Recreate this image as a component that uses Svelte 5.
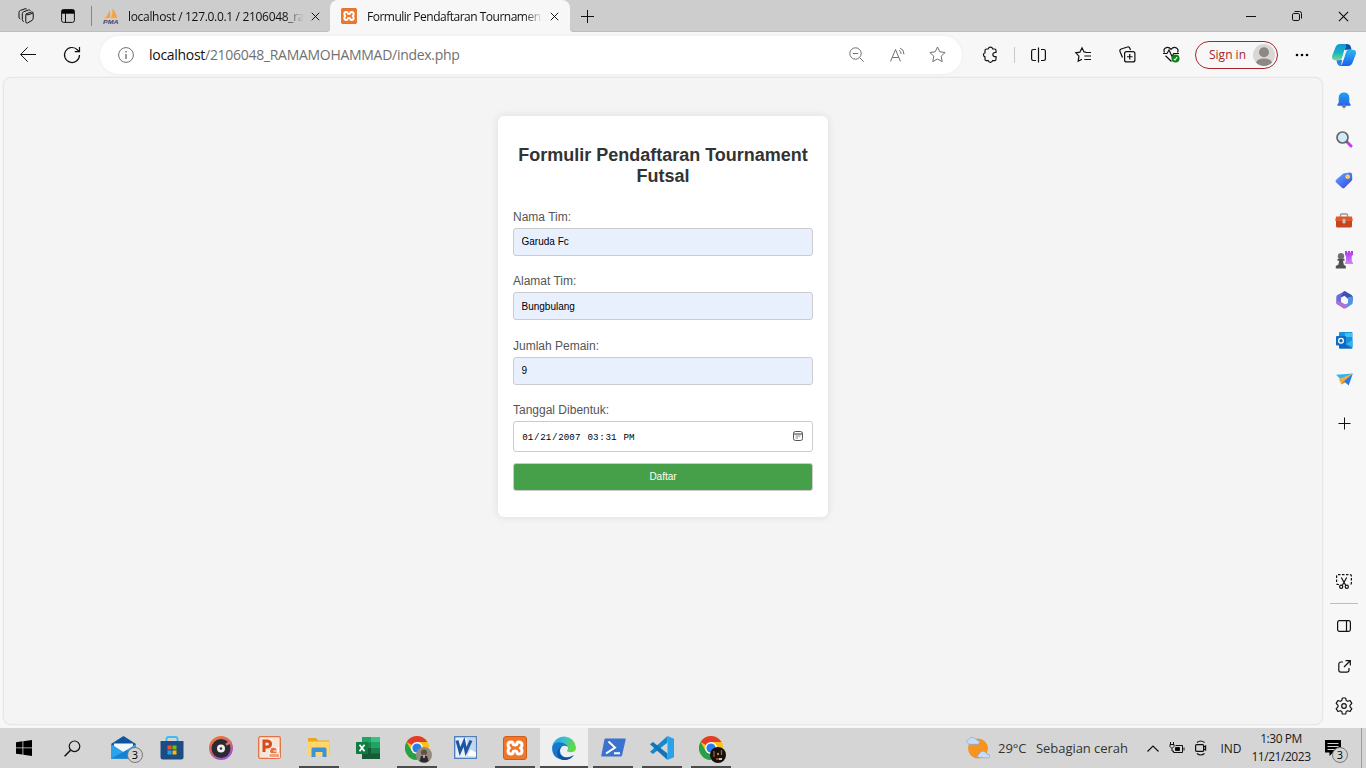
<script>
  let team = $state('Garuda Fc');
  let address = $state('Bungbulang');
  let players = $state('9');
</script>

<svelte:head><title>Formulir Pendaftaran Tournament Futsal</title></svelte:head>

{#snippet cross(s)}
  <svg width={s} height={s} viewBox="0 0 12 12" class="line"><path d="M1 1l10 10M11 1L1 11" stroke-width="1.300" /></svg>
{/snippet}

{#snippet xampp(s)}
  <svg width={s} height={s} viewBox="0 0 24 24">
    <rect x=".5" y=".5" width="23" height="23" rx="2.500" fill="#f0762a" stroke="#cf5d18" />
    <path d="M8.300 6q1.700 0 1.700 1.500T12 9t2-1.500T15.700 6Q19 6 19 9q0 2-1.500 3 1.500 1 1.500 3 0 3-3.300 3-1.700 0-1.700-1.500T12 15t-2 1.500T8.300 18Q5 18 5 15q0-2 1.500-3Q5 11 5 9q0-3 3.300-3z" fill="none" stroke="#fff" stroke-width="3" stroke-linejoin="round" />
  </svg>
{/snippet}

{#snippet chrome()}
  <svg width="24" height="24" viewBox="0 0 24 24">
    <circle cx="12" cy="12" r="12" fill="#fbc116" />
    <path d="M12 12L1.600 6A12 12 0 0 1 22.400 6H12z" fill="#e33b2e" />
    <path d="M1.600 6A12 12 0 0 0 12 24l5.200-9L12 12 6.800 15z" fill="#27a048" />
    <path d="M12 6h10.400A12 12 0 0 1 12 24l5.200-9z" fill="#fbc116" />
    <circle cx="12" cy="12" r="6" fill="#fff" /><circle cx="12" cy="12" r="4.600" fill="#2b7de9" />
  </svg>
{/snippet}

<div class="screen">
  <header class="tabs">
    <div class="seg left">
      <span class="cell w40">
        <svg width="18" height="18" viewBox="0 0 18 18" class="line"><path d="M9.500 6.700l5-1.700q1.700-.3 1.700 1.300v5q0 1.400-1.200 2.100L10.500 16q-1.700.4-1.700-1.300V7.700q0-.7.700-1zM9 7q.7 1 2 .8l4.800-1.600M6.800 14.600q-1.500-.5-1.500-2V6.700q0-1.500 1.500-2L11.500 3q1.400-.2 2 .6M3.300 12q-1.300-.5-1.300-2V5.400q0-1.500 1.500-2L8 1.800q1-.2 1.700.2" /></svg>
      </span>
      <span class="cell w44">
        <svg width="14" height="14" viewBox="0 0 14 14" class="line"><rect x=".6" y=".6" width="12.800" height="12.800" rx="2" /><path d="M1 1h12v3.200H1z" fill="#000" /><path d="M4.500 4v9" /></svg>
      </span>
      <i class="bar"></i>
      <div class="tab idle">
        <svg width="16" height="16" viewBox="0 0 16 16"><path d="M1 10.500Q5 8 6.500 1.500q1.200 4 .5 8.500zM7.800 10Q10 6 9.500.5q4 5 4.500 9.500z" fill="#f7a13c" /><path d="M0 11q8-2 16 0" stroke="#e9c9a0" fill="none" stroke-width=".6" /><text x="0" y="15.800" textLength="15.500" lengthAdjust="spacingAndGlyphs" class="pma">PMA</text></svg>
        <span class="tt idlett">localhost / 127.0.0.1 / 2106048_ra</span>
        {@render cross(9)}
      </div>
    </div>
    <div class="activewrap">
      <div class="tab active">
        {@render xampp(16)}
        <span class="tt">Formulir Pendaftaran Tournamen</span>
        {@render cross(9)}
      </div>
    </div>
    <div class="seg right">
      <svg width="13" height="13" viewBox="0 0 13 13" class="line"><path d="M6.500 0v13M0 6.500h13" /></svg>
      <span class="grow"></span>
      <span class="cell w46"><svg width="10" height="10" viewBox="0 0 10 10" class="line"><path d="M0 5.500h10" /></svg></span>
      <span class="cell w46"><svg width="10" height="10" viewBox="0 0 10 10" class="line"><rect x=".5" y="2.500" width="7" height="7" rx="1.300" /><path d="M2.500.5h5a2 2 0 0 1 2 2v5" /></svg></span>
      <span class="cell w46">{@render cross(11)}</span>
    </div>
  </header>

  <nav class="toolbar">
    <span class="cell nb"><svg width="16" height="16" viewBox="0 0 16 16" class="line"><path d="M16 7.500H.8M7.700.3L.6 7.500l7.100 7.200" /></svg></span>
    <span class="cell nb2"><svg width="18" height="18" viewBox="0 0 18 18" class="line s12"><path d="M16.500 9A7.500 7.500 0 1 1 14.600 4l1.500 1.500M16.500 1v4.700h-4.800" /></svg></span>
    <div class="address">
      <svg width="16" height="16" viewBox="0 0 16 16" class="line gray"><circle cx="8" cy="8" r="7.400" /><path d="M8 7v5M8 4v1.400" stroke-width="1.400" /></svg>
      <span class="url">localhost<em>/2106048_RAMAMOHAMMAD/index.php</em></span>
      <span class="cell w40"><svg width="16" height="16" viewBox="0 0 16 16" class="line gray"><circle cx="6.500" cy="6.500" r="5.700" /><path d="M3.800 6.500h5.400M10.600 10.600l4.200 4.200" /></svg></span>
      <span class="cell w40"><svg width="17" height="16" viewBox="0 0 17 16" class="line gray"><path d="M1 14.500L6 2.500l5 12M2.900 10.500h6.200M9.500 3.200q2 1 2.100 3.700M10.500 1q4 1.500 4 6.300" transform="translate(.5)" /></svg></span>
      <span class="cell w40"><svg width="17" height="17" viewBox="0 0 17 17" class="line gray"><path d="M8.500 1l2.300 4.800 5.300.7-3.900 3.700 1 5.400-4.700-2.600-4.700 2.600 1-5.400L.9 6.500l5.300-.7z" /></svg></span>
    </div>
    <span class="cell pz"><svg width="17" height="17" viewBox="0 0 17 17" class="line s12"><path d="M4.500 3h1.700a2.300 2.300 0 0 1 4.500 0h1.800q1.500 0 1.500 1.500v2h-1a2.100 2.100 0 0 0 0 4.200h1v2.500q0 1.500-1.500 1.500h-1.900a2.300 2.300 0 0 1-4.400 0H4.500Q3 14.700 3 13.200v-2.300a2.200 2.200 0 0 1 0-4.200V4.500Q3 3 4.500 3z" /></svg></span>
    <i class="vbar"></i>
    <span class="cell sp"><svg width="15" height="16" viewBox="0 0 15 16" class="line s12"><path d="M5 2.500H2.300Q.6 2.500.6 4.200v7.600q0 1.700 1.700 1.700H5M10 2.500h2.700q1.700 0 1.700 1.700v7.600q0 1.700-1.700 1.700H10M7.500.5v15" /></svg></span>
    <span class="cell w44"><svg width="17" height="16" viewBox="0 0 17 16" class="line s12"><path d="M11 5.200l-2-.3L7 .8 4.900 5.200.8 5.800l3.100 3.300-.7 5.200L7 12.300M10.500 5.500H16M9.300 9H16M9.300 12.500H16" /></svg></span>
    <span class="cell w44"><svg width="17" height="17" viewBox="0 0 17 17" class="line s12"><path d="M3.500 11.500L1 5.500Q.4 3.600 2.200 3L8.500 1q1.800-.5 2.500 1.500l.5 1.500" /><rect x="5.600" y="5.600" width="10.300" height="10.300" rx="2" /><path d="M10.750 8v5.500M8 10.750h5.500" /></svg></span>
    <span class="cell w44"><svg width="17" height="17" viewBox="0 0 17 17" class="line s12"><path d="M1.500 6.500Q0 3.500 2.500 2 5.500.3 8 3.300 10.500.3 13.500 2q2.500 1.500 1 4.500M0 7.500h4L6 4l3 6.500 1.700-3H16M2.500 9.800l6 5.700" /><circle cx="12.500" cy="12.500" r="4" fill="#10801a" stroke="none" /><path d="M10.800 13l1.200 1L14.200 11" stroke="#fff" /></svg></span>
    <div class="signin"><span>Sign in</span>
      <svg width="22" height="22" viewBox="0 0 22 22"><circle cx="11" cy="11" r="11" fill="#d9d7d5" /><circle cx="11" cy="8.300" r="5" fill="#8b8886" /><path d="M3 18.500q1.500-4 8-4t8 4a11 11 0 0 1-16 0z" fill="#8b8886" /></svg>
    </div>
    <span class="cell dots"><svg width="14" height="4" viewBox="0 0 14 4"><circle cx="2" cy="2" r="1.300" /><circle cx="7" cy="2" r="1.300" /><circle cx="12" cy="2" r="1.300" /></svg></span>
    <span class="cell cop">
      <svg width="24" height="22" viewBox="0 0 24 22">
        <defs>
          <linearGradient id="c1" x1="0" y1="0" x2="0" y2="1"><stop stop-color="#1296d4" /><stop offset=".55" stop-color="#18b4c4" /><stop offset="1" stop-color="#7ade7e" /></linearGradient>
          <linearGradient id="c2" x1="0" y1="0" x2="0" y2="1"><stop stop-color="#2eb8ee" /><stop offset="1" stop-color="#1a5ff0" /></linearGradient>
        </defs>
        <path d="M7.500 0H16q-1.800.5-2.500 3l-3 10.500Q9.700 16.200 7.500 16.200H3Q-.8 16.200.3 11.500L3.700 2.700Q4.700 0 7.500 0z" fill="url(#c1)" />
        <path d="M14.500 0q3.500 0 4.300 2.800l.8 3h-5q-1.400 0-2 .8l1-3.600q.3-2 .9-3z" fill="#124fa8" />
        <path d="M16.500 22H8q1.800-.5 2.500-3l3-10.500q.8-2.700 3-2.700H21q3.800 0 2.700 4.700l-3.400 8.800Q19.300 22 16.500 22z" fill="url(#c2)" />
        <path d="M9.500 22q-3.500 0-4.300-2.800l-.8-3h3.100q2.200 0 3-2l-1 5q-.3 1.800 0 2.800z" fill="#2c7de6" />
        <path d="M12.200 6.200h3q-1 .7-1.400 2.300l-2 6.700q-.3.800-1 .8H8.500q1.300-.7 1.700-2.300z" fill="#f7f7f7" />
      </svg>
    </span>
  </nav>

  <div class="middle">
    <main class="page">
      <form class="card" onsubmit={(e) => e.preventDefault()}>
        <h2>Formulir Pendaftaran Tournament Futsal</h2>
        <label for="team">Nama Tim:</label>
        <input id="team" bind:value={team} />
        <label for="addr">Alamat Tim:</label>
        <input id="addr" class="low" bind:value={address} />
        <label for="num" class="late">Jumlah Pemain:</label>
        <input id="num" bind:value={players} />
        <label for="date">Tanggal Dibentuk:</label>
        <div id="date" class="date">
          <span class="stamp"><b>01</b>/<b>21</b>/<b>2007</b>&nbsp;<b>03</b>:<b>31</b>&nbsp;<b>PM</b></span>
          <svg width="10" height="10" viewBox="0 0 10 10" fill="none" stroke="#555"><rect x=".5" y=".5" width="9" height="9" rx="2" /><path d="M.5 3h9" stroke-width="1.200" /><path d="M2.500 5h5M2.500 7h2.500" stroke="#888" /></svg>
        </div>
        <button>Daftar</button>
      </form>
    </main>

    <aside class="side">
      <span class="cell h40"><svg width="14" height="17" viewBox="0 0 14 17"><defs><linearGradient id="bell" x1="0" y1="0" x2="0" y2="1"><stop stop-color="#1fa2f2" /><stop offset="1" stop-color="#2a62e8" /></linearGradient></defs><path d="M4.500 14h5L7 16.500z" fill="#777" /><path d="M7 .5q5.300 0 5.300 5.500v4.500l1.500 2.500q0 .8-.8.8H1q-.8 0-.8-.8l1.500-2.500V6Q1.700.5 7 .5z" fill="url(#bell)" /></svg></span>
      <span class="cell h40 up"><svg width="17" height="17" viewBox="0 0 17 17"><path d="M10.800 10.800L15 15" stroke="#c23cf2" stroke-width="3" stroke-linecap="round" /><path d="M10 10l1.500 1.500" stroke="#666" stroke-width="2" /><circle cx="6.500" cy="6.500" r="5.500" fill="#cfeafa" stroke="#666" stroke-width="1.700" /></svg></span>
      <span class="cell h40"><svg width="18" height="17" viewBox="0 0 18 17"><defs><linearGradient id="tag" x1="0" y1="0" x2="1" y2="1"><stop stop-color="#64a8ff" /><stop offset="1" stop-color="#3541e8" /></linearGradient></defs><path d="M9.500 1.300L15 .5q1.800 0 2 1.500l.3 5q0 1-.7 1.700l-7 7q-1.400 1.200-2.700 0L1.200 10.500q-1.300-1.300 0-2.700l6.500-5.700q.8-.7 1.800-.8z" fill="url(#tag)" /><circle cx="12.700" cy="4.700" r="2" fill="#fbd22c" stroke="#f5eec0" stroke-width=".5" /></svg></span>
      <span class="cell h40"><svg width="18" height="15" viewBox="0 0 18 15"><path d="M5.500 4V2q0-1 1-1h5q1 0 1 1v2" fill="none" stroke="#999" stroke-width="1.500" /><path d="M1 3.500h16l.8 4.500H.2z" fill="#e0592c" /><path d="M1 8h16v5q0 1.500-1.500 1.500h-13Q1 14.500 1 13z" fill="#c8441a" /><rect x="7.500" y="6" width="3" height="4.500" rx="1" fill="#b9c4c9" /></svg></span>
      <span class="cell h40"><svg width="18" height="18" viewBox="0 0 18 18"><defs><linearGradient id="rook" x1="0" y1="0" x2="0" y2="1"><stop stop-color="#ae35ee" /><stop offset="1" stop-color="#d183fa" /></linearGradient></defs><path d="M10 0h2v1.500h1V0h2v1.500h1V0h2v4l-1.300 1v5L18 12v1h-8v-1l1-2V5l-1-1z" fill="url(#rook)" /><circle cx="6" cy="5.300" r="3.200" fill="#6f6f6f" /><path d="M2.500 8h7v1.700H8l.8 4 2 1.300v2.500H.8V15l2.500-1.300.9-4H2.500z" fill="#505050" /></svg></span>
      <span class="cell h40"><svg width="17" height="18" viewBox="0 0 17 18"><path d="M8 .4q1-.5 2 0l-3.500 2Q5 3.500 5 5v7L1.800 13.800Q.3 12.800.3 11.300V6q0-1.300 1.200-2z" fill="#6a6fd8" /><path d="M7.700.6q1.200-.6 2.300.1l5.500 3.200q1.200.8 1.200 2.200v4.500L12 8 8.500 4.700 5 6.500V5q0-1.300 1-2z" fill="#3a50b8" /><path d="M16.700 5.500v6q0 1.300-1.200 2L9.700 17.300 7 15l5-3V6z" fill="#4f93e2" /><path d="M.3 10v1.500q0 1.300 1.200 2l5.700 3.700q1.200.6 2.300 0l4-2.400L8.500 13 5 11z" fill="#b070d4" /><path d="M8.500 5.800l2.900 1.700v3.200l-2.900 1.700-2.900-1.700V7.500z" fill="#f7f7fc" /></svg></span>
      <span class="cell h40"><svg width="17" height="17" viewBox="0 0 17 17"><path d="M4 0h11.500q1 0 1 1v14.500q0 1-1 1H4q-1 0-1-1V1q0-1 1-1z" fill="#1792dc" /><path d="M9 1h7v4H9z" fill="#46bff2" /><path d="M3 9l13.500 7.500H4q-1 0-1-1z" fill="#1466b8" /><path d="M16.500 8v7L10 12z" fill="#36b3ef" /><rect y="4" width="10" height="9.500" rx="1" fill="#0d6cc4" /><circle cx="5" cy="8.700" r="2.400" fill="none" stroke="#fff" stroke-width="1.300" /></svg></span>
      <span class="cell h40 up"><svg width="17" height="13" viewBox="0 0 18 14"><path d="M0 2L18 .5 6 8z" fill="#32b5ec" /><path d="M18 .5L13.500 13.500 8 8.500z" fill="#2a79e4" /><path d="M18 .5L3 6.500l2.500 6L8 9z" fill="#f3ae38" /><path d="M5.500 12.500L8 8.500l2 1.500z" fill="#c87a18" /></svg></span>
      <span class="cell h48 up"><svg width="11" height="11" viewBox="0 0 11 11" class="line"><path d="M5.500-.5v12M-.5 5.500h12" /></svg></span>
      <span class="grow"></span>
      <span class="cell h44"><svg width="16" height="15" viewBox="0 0 16 15" class="line s12"><path d="M3 10.500H2Q.6 10.500.6 9V2Q.6.600 2 .600h12q1.400 0 1.400 1.400v7q0 1.500-1.400 1.500h-1" stroke-dasharray="2.500 1.500" /><path d="M5.300 3.500l4.500 8M10.700 3.500l-4.500 8" /><circle cx="5.200" cy="12.700" r="1.600" /><circle cx="10.800" cy="12.700" r="1.600" /></svg></span>
      <i class="hr"></i>
      <span class="cell h44"><svg width="14" height="12" viewBox="0 0 14 12" class="line s12"><rect x=".6" y=".6" width="12.800" height="10.800" rx="1.800" /><path d="M9.500.600v10.800" /></svg></span>
      <span class="cell h36"><svg width="13" height="13" viewBox="0 0 13 13" class="line s12"><path d="M5 2H3Q.8 2 .8 4.200V10q0 2.200 2.200 2.200h5.800Q11 12.200 11 10V8M7.500.7h4.800v4.800M12 1L6 7" /></svg></span>
      <span class="cell h44"><svg width="18" height="18" viewBox="0 0 18 18" class="line s12"><path d="M7.300 1h3.400l.5 2.500 1.500.8 2.400-.8 1.700 2.900L15 8.300v1.500l1.800 1.800-1.700 2.900-2.400-.8-1.500.8-.5 2.500H7.300l-.5-2.500-1.500-.8-2.400.8-1.700-2.900L3 9.800V8.300L1.200 6.400l1.700-2.900 2.400.8 1.500-.8z" stroke-linejoin="round" /><circle cx="9" cy="9" r="2.300" /></svg></span>
    </aside>
  </div>

  <footer class="taskbar">
    <span class="cell start"><svg width="16" height="16" viewBox="0 0 16 16"><path d="M0 2.200l6.500-.9v6.200H0zM7.300 1.200L16 0v7.500H7.300zM0 8.300h6.500v6.300L0 13.700zM7.300 8.300H16V16l-8.700-1.200z" /></svg></span>
    <span class="cell start"><svg width="17" height="17" viewBox="0 0 17 17" class="line s12"><circle cx="10.500" cy="6.300" r="5.300" /><path d="M6.500 10.300L.6 16.200" stroke-width="1.500" /></svg></span>
    <div class="apps">
      <span class="app"><svg width="25" height="23" viewBox="0 0 25 23"><path d="M0 8L12.500 0 25 8v14.500H0z" fill="#10539f" /><path d="M3 7.500h19V16H3z" fill="#f4f8fc" /><path d="M0 8l12.500 8L25 8v14.500H0z" fill="#2ba3ea" /><path d="M0 22.500L16 14l9 8.500z" fill="#1682d4" /></svg><b class="badge mail">3</b></span>
      <span class="app"><svg width="24" height="24" viewBox="0 0 24 24"><path d="M6.500 6V3q0-2 2-2h7q2 0 2 2v3" fill="none" stroke="#3dbbf3" stroke-width="1.900" /><path d="M.5 5h23v16q0 2.500-2.500 2.500H3Q.5 23.500.5 21z" fill="#1d4c82" /><path d="M7.500 9.500h4v4h-4z" fill="#f25022" /><path d="M12.500 9.500h4v4h-4z" fill="#7fba00" /><path d="M7.500 14.500h4v4h-4z" fill="#15a6f0" /><path d="M12.500 14.500h4v4h-4z" fill="#ffb900" /></svg></span>
      <span class="app"><svg width="24" height="24" viewBox="0 0 24 24"><defs><linearGradient id="gm" x1="0" y1="0" x2=".5" y2="1"><stop stop-color="#f57a32" /><stop offset=".5" stop-color="#d56862" /><stop offset="1" stop-color="#9a55cf" /></linearGradient></defs><circle cx="12" cy="12" r="12" fill="url(#gm)" /><circle cx="12" cy="12.500" r="9.500" fill="#292b31" /><circle cx="12" cy="12.500" r="4" fill="#eee" /><circle cx="12" cy="12.500" r="1.200" fill="#333" /><path d="M22 5.500l-5 3.200" stroke="#df7269" stroke-width="2.500" /></svg></span>
      <span class="app nudge"><svg width="23" height="23" viewBox="0 0 23 23"><rect x=".7" y=".7" width="21.600" height="21.600" rx="1.500" fill="#f9e4da" stroke="#e17345" stroke-width="1.300" /><path d="M6 16V5h2.500q4 0 4 3t-4 3H6.500" fill="none" stroke="#d44d1d" stroke-width="3" /><circle cx="15.500" cy="15" r="4" fill="#e57342" stroke="#fff" /><path d="M15.500 15h5v-4" stroke="#fff" fill="none" /><rect x="11" y="17.500" width="10.500" height="4" fill="#eda285" stroke="#fff" stroke-width=".7" /></svg></span>
      <span class="app open"><svg width="22" height="20" viewBox="0 0 22 20"><path d="M0 1q0-1 1-1h7l2.200 2.500H20.500q1 0 1 1V17H0z" fill="#e9a71e" /><path d="M0 3.500h21.500V18H0z" fill="#ffd667" /><path d="M3.500 11q0-1.500 1.500-1.500h12q1.500 0 1.500 1.500v8h-4v-5h-7v5h-4z" fill="#3b92da" /></svg></span>
      <span class="app"><svg width="24" height="22" viewBox="0 0 24 22"><path d="M6 0h17q1 0 1 1v20q0 1-1 1H6z" fill="#18814c" /><path d="M6 0h9v5.500H6z" fill="#21a366" /><path d="M15 0h9v5.500h-9z" fill="#33c481" /><path d="M15 5.500h9V11h-9z" fill="#21a366" /><path d="M6 11h9v11H6zM15 16.500h9V22h-9z" fill="#185c37" /><rect y="5" width="12" height="12" rx="1" fill="#107c41" /><path d="M3.500 7.800l5 6.500M8.500 7.800l-5 6.500" stroke="#fff" stroke-width="1.800" /></svg></span>
      <span class="app open">{@render chrome()}
        <svg class="mini" width="16" height="16" viewBox="0 0 16 16"><circle cx="8" cy="8" r="8" fill="#978b80" /><circle cx="8" cy="5.500" r="3" fill="#5c514b" /><path d="M3.500 14l1.500-5h6l1.500 5q-4 3-9 0z" fill="#2b2930" /><path d="M7 7.500h2V11H7z" fill="#b89a86" /></svg></span>
      <span class="app nudge"><svg width="23" height="23" viewBox="0 0 23 23"><rect x=".7" y=".7" width="21.600" height="21.600" fill="#e8f0fa" stroke="#4a7ab8" stroke-width="1.300" /><path d="M13 21.500V1.500h8.500v20z" fill="#c3d6ee" /><path d="M3 4.500l3 11L10 6l2 9.500 5-11" fill="none" stroke="#1e55a5" stroke-width="3" /><path d="M13 20l3.500-6.500 5.500 3v4z" fill="#fff" /></svg></span>
      <span class="app open">{@render xampp(24)}</span>
      <span class="app open current"><svg width="24" height="24" viewBox="0 0 24 24"><defs><linearGradient id="e1" x1="0" y1="0" x2="1" y2=".3"><stop stop-color="#2798dd" /><stop offset=".5" stop-color="#34c1d8" /><stop offset="1" stop-color="#66d744" /></linearGradient></defs><path d="M.2 10.500A12 12 0 0 1 24 11.500q0 4.500-4.800 4.700-4.200 0-4.200-1.700 1.500-1.200 1-3.200Q14.500 7 9 7 3 7 .2 10.500z" fill="url(#e1)" /><path d="M.2 10.500Q3.500 5.500 9 6.500q5.500.8 7 4.500-4-2.500-6.500 0-3.500 4.500 1 9 5 3.500 11.500-1Q18 24 12 24-.7 23 .2 10.500z" fill="#1478ce" /><path d="M9.500 11q-4 3.500-1 8 4.500 5 13 .2Q18 24.500 11 24 4.500 22 5.500 16q.5-3.500 4-5z" fill="#12509c" /></svg></span>
      <span class="app open"><svg width="25" height="19" viewBox="0 0 25 19"><path d="M4.500.5H24q1 0 .7 1L21 17.500q-.3 1-1.300 1H1q-1 0-.7-1L3.500 1.300q.2-.8 1-.8z" fill="#3b72cf" /><path d="M7.500 3.500l6.500 6-9 6M13 15.200h6" fill="none" stroke="#fff" stroke-width="2" /></svg></span>
      <span class="app open"><svg width="24" height="24" viewBox="0 0 24 24"><path d="M17.500 0v6.500L3 18 0 15.700z" fill="#1688cf" /><path d="M17.500 24v-6.500L3 6 0 8.300z" fill="#1274b8" /><path d="M17.500 0L24 2.700v18.600L17.500 24z" fill="#27a3ec" /></svg></span>
      <span class="app open">{@render chrome()}
        <svg class="mini" width="16" height="16" viewBox="0 0 16 16"><circle cx="8" cy="8" r="8" fill="#16110e" /><path d="M4 4v6M11.500 3v5M6 12h5" stroke="#a5602c" stroke-width="1.300" /><circle cx="8" cy="7" r="1.200" fill="#b08058" /><path d="M9 11h3v2H9z" fill="#cfc6bd" /></svg></span>
    </div>
    <span class="grow"></span>
    <div class="weather">
      <svg width="24" height="22" viewBox="0 0 24 22"><circle cx="12" cy="11.500" r="10" fill="#f79420" /><path d="M2 6.500Q-1 4 2.500 2.800 4-.5 7.500.5q2.500.7 3 2.500Q14 3 13.500 6q-.5 1.500-2.500 1.300H4q-1.300 0-2-.8zM13 20.500q-3-1.500.3-3.700 1-3 4.200-2.600 2.500.3 3.200 2.800 3.500.3 3 2.700-.3 1.200-2 1.300z" fill="#c6dcf7" stroke="#7ea8e0" stroke-width=".7" /></svg>
      <span class="temp">29°C</span><span class="sky">Sebagian cerah</span>
    </div>
    <span class="cell tray"><svg width="12" height="7" viewBox="0 0 12 7" class="line s12"><path d="M.5 6.500L6 1l5.500 5.500" /></svg></span>
    <span class="cell tray"><svg width="16" height="12" viewBox="0 0 16 12" class="line"><path d="M6.500 3.500h7v7h-9V9M15 5.500v3" /><path d="M6.500 5.500h4v3h-4z" fill="#000" /><path d="M1 2.500h4v2L3 6.500 1 4.500zM1.500 0v2.500M4.500 0v2.500M3 6.500V9h1.500" /></svg></span>
    <span class="cell tray"><svg width="12" height="16" viewBox="0 0 12 16" class="line s12"><path d="M2 2.500q3.500-3 7.500 0M2 13.500q3.500 3 7.500 0" /><rect x=".6" y="4.600" width="8" height="6.800" rx="1" /><path d="M8.600 7l2-1v4l-2-1" /></svg></span>
    <span class="lang">IND</span>
    <div class="clock"><span>1:30 PM</span><span>11/21/2023</span></div>
    <div class="notif"><svg width="17" height="17" viewBox="0 0 17 17"><path d="M0 0h16v12.500H8L4.500 16v-3.500H0z" /><path d="M2.500 3.500h11M2.500 6.500h11M2.500 9.500h7" stroke="#d3d3d3" /></svg><b class="badge">3</b></div>
    <i class="peek"></i>
  </footer>
</div>

<style>
  :global(body) { margin: 0; overflow: hidden; }
  .screen { width: 1366px; height: 768px; display: flex; flex-direction: column; background: #f7f7f7; font: 12px "Open Sans", "Noto Sans", sans-serif; color: #1b1b1b; overflow: hidden; }
  .screen * { box-sizing: border-box; }
  svg { display: block; flex: none; }
  .line { fill: none; stroke: #111; stroke-width: 1; overflow: visible; }
  .s12 { stroke-width: 1.2; }
  .gray { stroke: #707070; }
  .cell { display: flex; align-items: center; justify-content: center; flex: none; }
  .grow { flex: 1; }
  .w40 { width: 40px; } .w44 { width: 44px; } .w46 { width: 46px; }

  .tabs { display: flex; height: 32px; flex: none; }
  .seg { background: #cdcdcd; display: flex; align-items: center; box-shadow: inset 0 -1px #bebebe; }
  .left { width: 330px; padding-left: 6px; border-radius: 0 0 4px 0; }
  .right { flex: 1; padding-left: 11px; border-radius: 0 0 0 4px; }
  .bar { width: 1px; height: 20px; background: #858585; margin-left: 1px; }
  .tab { display: flex; align-items: center; }
  .idle { padding-left: 11px; }
  .tt { margin: 0 9px 0 10px; width: 174px; white-space: nowrap; letter-spacing: -.5px; color: #111; -webkit-mask-image: linear-gradient(90deg, #000 157px, transparent 176px); mask-image: linear-gradient(90deg, #000 157px, transparent 176px); }
  .idlett { margin: 0 8px 0 9px; width: 175px; letter-spacing: -.32px; }
  .activewrap { width: 240px; background: linear-gradient(#cdcdcd 0 10px, #f7f7f7 10px); }
  .active { height: 32px; padding-left: 11px; background: #f7f7f7; border-radius: 8px 8px 0 0; }
  .pma { font: italic bold 6px "Liberation Sans", sans-serif; fill: #44447c; }

  .toolbar { display: flex; align-items: center; height: 45px; flex: none; }
  .nb { width: 44px; margin-left: 6px; }
  .nb2 { width: 44px; margin-right: 6px; }
  .address { width: 862px; height: 38px; background: #fff; border-radius: 19px; display: flex; align-items: center; padding: 0 5px 0 18px; box-shadow: 0 0 4px #0000000d; }
  .url { flex: 1; margin-left: 15px; font-size: 14px; letter-spacing: -.29px; color: #111; }
  .url em { font-style: normal; color: #707070; }
  .pz { width: 52px; margin-left: 2px; }
  .vbar { width: 1px; height: 16px; background: #c8c8c8; margin-left: -2px; }
  .sp { width: 46px; }
  .signin { width: 83px; height: 28px; border: 1px solid #a4262c; border-radius: 14px; display: flex; align-items: center; justify-content: space-between; padding: 0 2px 0 13px; margin-left: 2px; color: #a4262c; white-space: nowrap; }
  .dots { width: 48px; }
  .cop { width: 36px; }

  .middle { flex: 1; min-height: 0; display: flex; }
  .page { width: 1320px; flex: none; margin: 0 0 3px 3px; border: 1px solid #e6e6e6; border-radius: 8px; background: #f4f4f4; box-shadow: 0 0 2px #0001; display: flex; justify-content: center; align-items: flex-start; padding-top: 38px; }
  .card { width: 330px; height: 401px; border-radius: 6px; background: #fff; box-shadow: 0 0 8px rgba(0, 0, 0, .1); padding: 29px 15px 0; font-family: "Liberation Sans", Arial, sans-serif; display: flex; flex-direction: column; }
  h2 { margin: 0 0 23px; font-size: 18px; line-height: 21px; text-align: center; color: #333; }
  label { font-size: 12px; line-height: 14px; color: #555; margin-bottom: 4px; }
  input { height: 28px; flex: none; border: 1px solid #ccc; border-radius: 3px; background: #e8f0fe; padding: 0 7.500px 1px; font: 10px "Liberation Sans", Arial, sans-serif; color: #000; margin: 0 0 18px; outline: 0; }
  .low { padding: 1px 7.500px 0; }
  .late { margin-top: 1px; }
  .date { height: 31px; flex: none; border: 1px solid #ccc; border-radius: 3px; display: flex; align-items: center; justify-content: space-between; padding: 0 9px 1px 7.500px; margin-bottom: 11px; }
  .stamp { font: 9.200px "Liberation Mono", monospace; color: #000; white-space: nowrap; padding-top: 2px; }
  .stamp b { font-weight: 400; padding: 0 .750px; }
  button { height: 28px; flex: none; border: 1px solid #ccc; border-radius: 3px; background: #45a049; color: #fff; font: 10px "Liberation Sans", Arial, sans-serif; padding: 0 0 1px; }

  .side { width: 44px; flex: none; margin-left: -1px; display: flex; flex-direction: column; padding-top: 3px; }
  .up { padding-bottom: 2px; }
  .h40 { height: 40px; } .h44 { height: 44px; } .h48 { height: 48px; } .h36 { height: 36px; }
  .hr { height: 1px; width: 28px; margin-left: 8px; background: #bdbdbd; }

  .taskbar { height: 40px; flex: none; background: #d5d5d5; display: flex; align-items: stretch; }
  .start { width: 48px; }
  .apps { display: flex; gap: 1px; margin-left: 3px; }
  .app { width: 48px; position: relative; display: flex; align-items: center; justify-content: center; padding-top: 1px; border-bottom: 2px solid transparent; }
  .nudge { padding-right: 2px; }
  .open::after { content: ""; position: absolute; left: 4px; right: 4px; bottom: -2px; height: 2px; background: #4c4c4c; }
  .current { background: #efefef; }
  .current::after { left: 0; right: 0; }
  .badge { position: absolute; width: 16px; height: 16px; border: 1px solid #777; border-radius: 50%; background: #d3d3d3; font: 11px/14px "Open Sans", sans-serif; text-align: center; color: #000; }
  .mail { left: 28px; top: 19px; }
  .mini { position: absolute; left: 23px; top: 19px; }
  .weather { display: flex; align-items: center; font-size: 13px; color: #333; white-space: nowrap; letter-spacing: -.05px; }
  .temp { margin-left: 8px; width: 38px; }
  .sky { width: 105px; }
  .tray { width: 24px; }
  .lang { width: 36px; display: flex; align-items: center; justify-content: center; }
  .clock { width: 64px; display: flex; flex-direction: column; align-items: center; line-height: 18px; padding-top: 2px; letter-spacing: -.45px; }
  .notif { position: relative; width: 36px; padding: 12px 0 0 12px; margin-right: 12px; }
  .notif .badge { left: 19px; top: 19px; }
  .peek { width: 5px; border-left: 1px solid #9c9c9c; }
</style>
